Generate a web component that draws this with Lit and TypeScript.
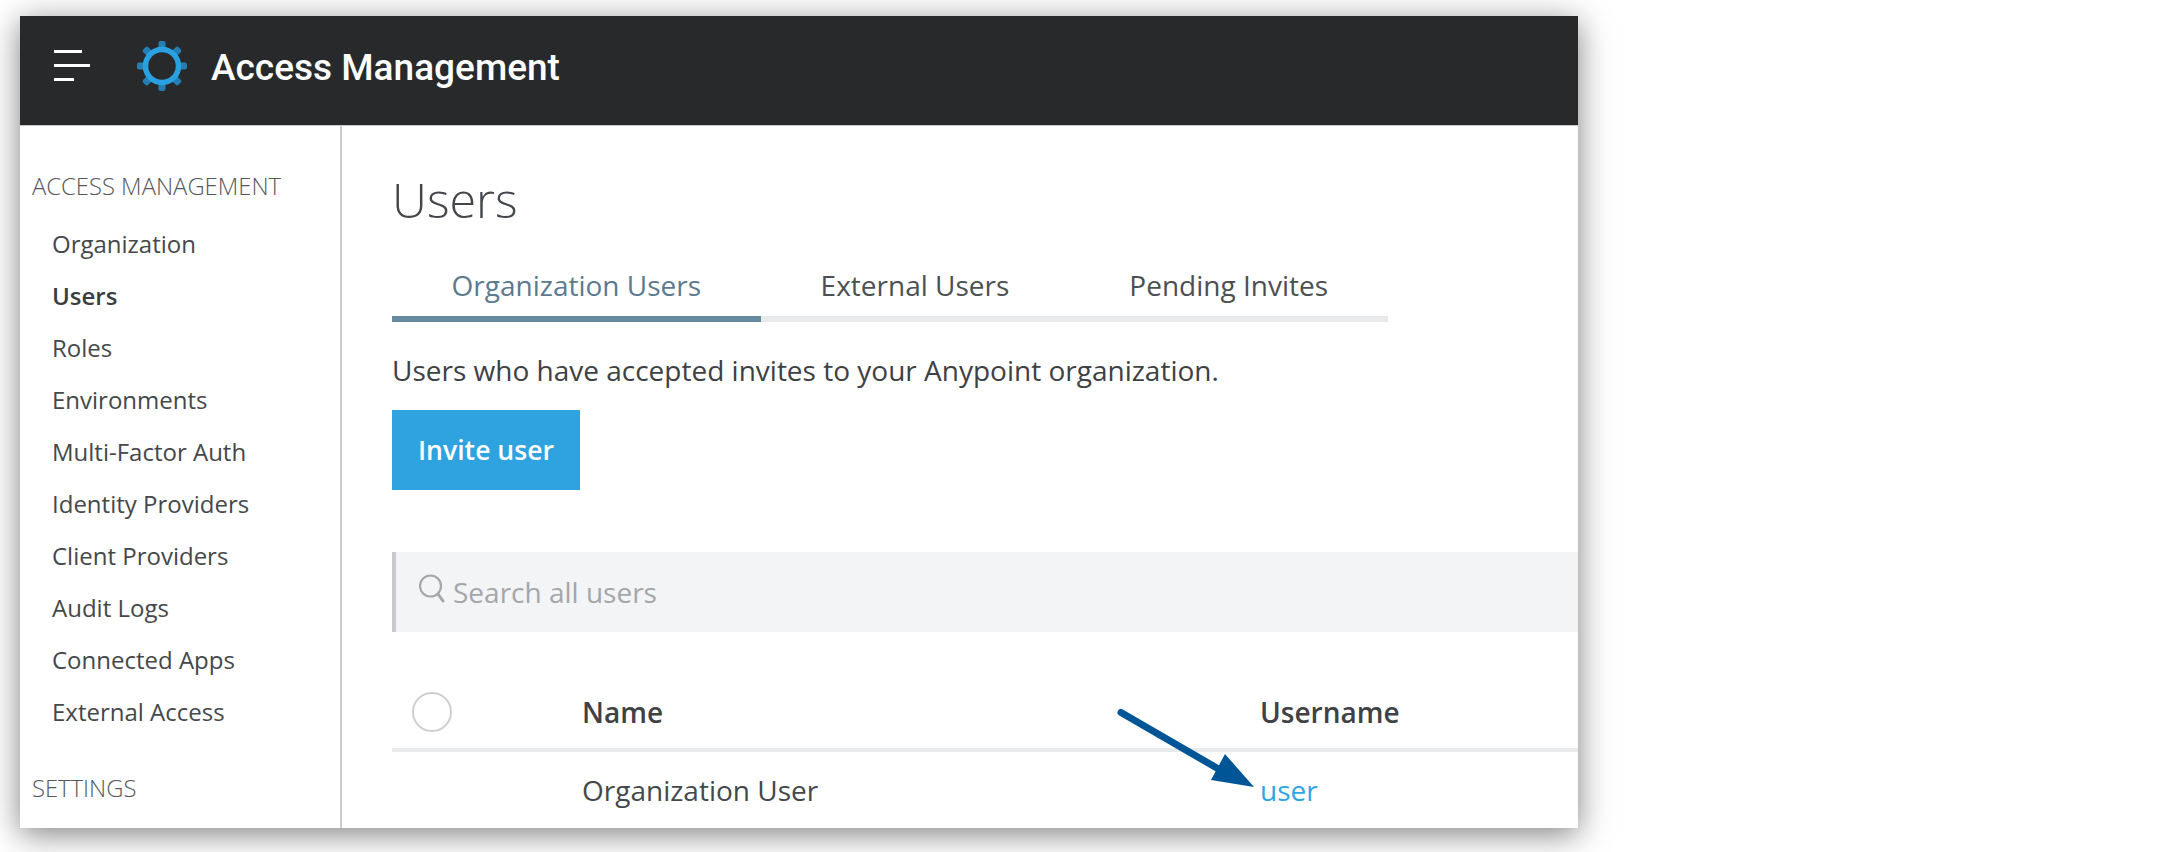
import { LitElement, css, html, svg } from "lit";
import { customElement } from "lit/decorators.js";

const NAV_ITEMS = [
  "Organization",
  "Users",
  "Roles",
  "Environments",
  "Multi-Factor Auth",
  "Identity Providers",
  "Client Providers",
  "Audit Logs",
  "Connected Apps",
  "External Access",
];

const TABS = ["Organization Users", "External Users", "Pending Invites"];

const TOOTH_ANGLES = [0, 45, 90, 135, 180, 225, 270, 315];

@customElement("app-root")
export class AppRoot extends LitElement {
  static styles = css`
    :host {
      display: block;
      width: 2162px;
      height: 852px;
      background: #fff;
      font-family: "Open Sans", sans-serif;
      color: #3e4144;
      overflow: hidden;
    }
    .window {
      position: relative;
      display: flex;
      flex-direction: column;
      width: 1558px;
      height: 812px;
      margin: 0 0 0 20px;
      top: 16px;
      background: #fff;
      box-shadow: 0 6px 30px rgba(0, 0, 0, 0.5);
      overflow: hidden;
    }
    .topbar {
      flex: none;
      display: flex;
      align-items: center;
      height: 110px;
      padding-bottom: 10px;
      background: #27292b;
      border-bottom: 1px solid #c8c9ca;
      box-sizing: border-box;
    }
    .burger {
      display: flex;
      flex-direction: column;
      gap: 11px;
      width: 36px;
      margin-left: 34px;
    }
    .burger span {
      display: block;
      height: 3px;
      background: #fff;
    }
    .burger span:nth-child(1) {
      width: 28px;
    }
    .burger span:nth-child(3) {
      width: 20px;
    }
    .logo {
      margin-left: 46px;
      display: block;
    }
    .product {
      margin: 4px 0 0 23px;
      font-family: Roboto, sans-serif;
      font-size: 37px;
      font-weight: 500;
      color: #fff;
      white-space: nowrap;
    }
    .body {
      flex: 1;
      display: flex;
      min-height: 0;
    }
    .sidebar {
      flex: none;
      width: 322px;
      box-sizing: border-box;
      border-right: 2px solid #c9cbcd;
      padding: 44px 0 0 12px;
    }
    .section {
      font-size: 23.8px;
      font-weight: 300;
      line-height: 32px;
      color: #55585b;
    }
    .section.settings {
      margin-top: 34px;
    }
    .nav {
      display: flex;
      flex-direction: column;
      margin-top: 16px;
      padding-left: 20px;
    }
    .nav div {
      height: 52px;
      line-height: 52px;
      font-size: 24px;
      color: #45484b;
    }
    .nav .current {
      font-weight: 600;
      color: #3a3d40;
    }
    .main {
      flex: 1;
      min-width: 0;
      padding: 41px 0 0 50px;
    }
    h1 {
      margin: 0;
      font-size: 48.5px;
      font-weight: 300;
      line-height: 64px;
      color: #43464a;
    }
    .tabs {
      display: flex;
      width: 996px;
      margin-top: 32px;
      height: 59px;
      box-sizing: border-box;
      border-bottom: 6px solid #e8e9eb;
    }
    .tab {
      height: 59px;
      box-sizing: border-box;
      padding: 0 60px;
      font-size: 28px;
      line-height: 44px;
      color: #4d5053;
      white-space: nowrap;
    }
    .tab.active {
      width: 370px;
      padding: 0;
      text-align: center;
      color: #5c7a8f;
      border-bottom: 6px solid #668a9f;
    }
    .desc {
      margin-top: 28px;
      font-size: 28px;
      line-height: 40px;
      color: #3e4144;
    }
    .invite {
      display: block;
      width: 188px;
      height: 80px;
      margin-top: 20px;
      padding: 0;
      border: none;
      background: #2fa2e0;
      color: #fff;
      font-family: inherit;
      font-size: 26.6px;
      font-weight: 600;
    }
    .search {
      display: flex;
      align-items: center;
      height: 80px;
      margin-top: 62px;
      background: #f3f4f6;
      border-left: 4px solid #c9cbce;
      padding-left: 23px;
      box-sizing: border-box;
    }
    .search svg {
      display: block;
      margin-top: -6px;
    }
    .search span {
      margin-left: 8px;
      font-size: 28px;
      color: #a4a6a9;
    }
    .row {
      display: grid;
      grid-template-columns: 190px 678px 1fr;
      align-items: center;
      font-size: 28px;
    }
    .row.head {
      height: 80px;
      margin-top: 40px;
      box-sizing: border-box;
      border-bottom: 4px solid #e9eaeb;
      padding-top: 4px;
      font-weight: 600;
      color: #3f4245;
    }
    .row.data {
      height: 76px;
      color: #45484b;
    }
    .radio {
      width: 40px;
      height: 40px;
      margin-left: 20px;
      box-sizing: border-box;
      border: 2px solid #cfd0d2;
      border-radius: 50%;
    }
    .link {
      color: #2fa5e4;
    }
    .arrow {
      position: absolute;
      left: 0;
      top: 0;
      pointer-events: none;
    }
  `;

  render() {
    return html`
      <div class="window">
        <header class="topbar">
          <div class="burger"><span></span><span></span><span></span></div>
          <svg class="logo" width="52" height="52" viewBox="0 0 52 52">
            ${TOOTH_ANGLES.map(
              (a) => svg`<rect
                x="22.5"
                y="1"
                width="7"
                height="8"
                rx="2"
                fill="#2480b4"
                transform="rotate(${a} 26 26)"
              ></rect>`
            )}
            <circle cx="26" cy="26" r="16.5" fill="none" stroke="#29a0e0" stroke-width="5.5"></circle>
          </svg>
          <div class="product">Access Management</div>
        </header>
        <div class="body">
          <aside class="sidebar">
            <div class="section">ACCESS MANAGEMENT</div>
            <nav class="nav">
              ${NAV_ITEMS.map(
                (item) => html`<div class=${item === "Users" ? "current" : ""}>${item}</div>`
              )}
            </nav>
            <div class="section settings">SETTINGS</div>
          </aside>
          <main class="main">
            <h1>Users</h1>
            <div class="tabs">
              ${TABS.map(
                (t, i) => html`<div class=${i === 0 ? "tab active" : "tab"}>${t}</div>`
              )}
            </div>
            <div class="desc">Users who have accepted invites to your Anypoint organization.</div>
            <button class="invite">Invite user</button>
            <div class="search">
              <svg width="26" height="30" viewBox="0 0 26 30" fill="none" stroke="#a4a6a9" stroke-width="2.2">
                <circle cx="11.5" cy="12" r="10.5"></circle>
                <path d="M19 20l5 7" stroke-width="3" stroke-linecap="round"></path>
              </svg>
              <span>Search all users</span>
            </div>
            <div class="row head">
              <div><div class="radio"></div></div>
              <div>Name</div>
              <div>Username</div>
            </div>
            <div class="row data">
              <div></div>
              <div>Organization User</div>
              <div class="link">user</div>
            </div>
          </main>
        </div>
        <svg class="arrow" width="1558" height="812" viewBox="0 0 1558 812">
          <path d="M1101 696.5L1202 755" fill="none" stroke="#005596" stroke-width="7" stroke-linecap="round"></path>
          <path d="M1234 771L1205 738L1191 764Z" fill="#005596"></path>
        </svg>
      </div>
    `;
  }
}
